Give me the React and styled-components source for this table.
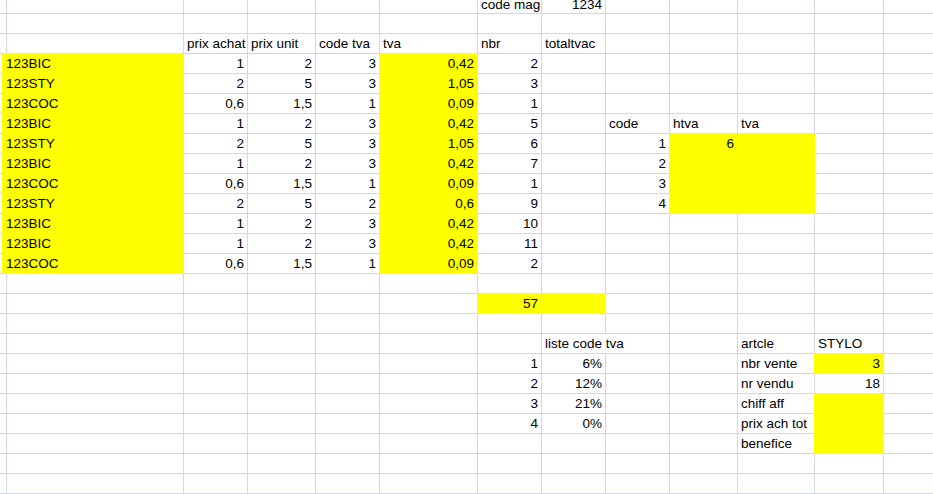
import React from "react";
import styled, { createGlobalStyle } from "styled-components";

const Global = createGlobalStyle`
  html, body { margin: 0; padding: 0; background: #ffffff; overflow: hidden; }
  #root { width: 933px; height: 494px; overflow: hidden; }
`;

const GRID = "#d0d7e5";
const YELLOW = "#ffff00";

const Sheet = styled.div`
  display: grid;
  grid-template-columns: 3px 181px 64px 68px 64px 98px 64px 64px 64px 68px 77px 69px 60px;
  grid-template-rows: 14px repeat(24, 20px);
  width: 933px;
  height: 494px;
  overflow: hidden;
  font-family: "Liberation Sans", Arial, sans-serif;
  font-size: 13.5px;
  color: #000000;
`;

const Cell = styled.div`
  box-sizing: border-box;
  display: flex;
  align-items: flex-end;
  justify-content: ${(p) => (p.$right ? "flex-end" : "flex-start")};
  padding: 0 3px ${(p) => (p.$top ? "2px" : "1px")} 3px;
  line-height: ${(p) => (p.$top ? "12px" : "16px")};
  white-space: nowrap;
  overflow: visible;
  border-right: 1px solid ${(p) => (p.$fill ? YELLOW : p.$spill ? "transparent" : GRID)};
  border-bottom: 1px solid ${(p) => (p.$fill ? YELLOW : GRID)};
  background: ${(p) => (p.$fill ? YELLOW : "transparent")};
  box-shadow: ${(p) => (p.$fill ? `-1px -1px 0 0 ${YELLOW}` : "none")};
  min-width: 0;
`;

const COLS = ["_", "A", "B", "C", "D", "E", "F", "G", "H", "I", "J", "K", "L"];

const rows = [
  { F: "code mag", G: "1234" },
  {},
  { B: "prix achat", C: "prix unit", D: "code tva", E: "tva", F: "nbr", G: "totaltvac" },
  { A: "123BIC", B: "1", C: "2", D: "3", E: "0,42", F: "2" },
  { A: "123STY", B: "2", C: "5", D: "3", E: "1,05", F: "3" },
  { A: "123COC", B: "0,6", C: "1,5", D: "1", E: "0,09", F: "1" },
  { A: "123BIC", B: "1", C: "2", D: "3", E: "0,42", F: "5", H: "code", I: "htva", J: "tva" },
  { A: "123STY", B: "2", C: "5", D: "3", E: "1,05", F: "6", H: "1", I: "6" },
  { A: "123BIC", B: "1", C: "2", D: "3", E: "0,42", F: "7", H: "2" },
  { A: "123COC", B: "0,6", C: "1,5", D: "1", E: "0,09", F: "1", H: "3" },
  { A: "123STY", B: "2", C: "5", D: "2", E: "0,6", F: "9", H: "4" },
  { A: "123BIC", B: "1", C: "2", D: "3", E: "0,42", F: "10" },
  { A: "123BIC", B: "1", C: "2", D: "3", E: "0,42", F: "11" },
  { A: "123COC", B: "0,6", C: "1,5", D: "1", E: "0,09", F: "2" },
  {},
  { F: "57" },
  {},
  { G: "liste code tva", J: "artcle", K: "STYLO" },
  { F: "1", G: "6%", J: "nbr vente", K: "3" },
  { F: "2", G: "12%", J: "nr vendu", K: "18" },
  { F: "3", G: "21%", J: "chiff aff" },
  { F: "4", G: "0%", J: "prix ach tot" },
  { J: "benefice" },
  {},
  {},
];

const yellow = new Set();
for (let r = 3; r <= 13; r++) {
  yellow.add(`A${r}`);
  yellow.add(`E${r}`);
}
for (let r = 7; r <= 10; r++) {
  yellow.add(`I${r}`);
  yellow.add(`J${r}`);
}
["F15", "G15", "K18", "K20", "K21", "K22"].forEach((k) => yellow.add(k));

const spill = new Set(["G17"]);

const isNumber = (v) => /^[\d,%]+$/.test(v);

export default function App() {
  return (
    <>
      <Global />
      <Sheet>
        {rows.map((row, r) =>
          COLS.map((c) => {
            const v = row[c] || "";
            const key = `${c}${r}`;
            return (
              <Cell
                key={key}
                $top={r === 0}
                $fill={yellow.has(key)}
                $spill={spill.has(key)}
                $right={v !== "" && isNumber(v)}
              >
                {v}
              </Cell>
            );
          })
        )}
      </Sheet>
    </>
  );
}
